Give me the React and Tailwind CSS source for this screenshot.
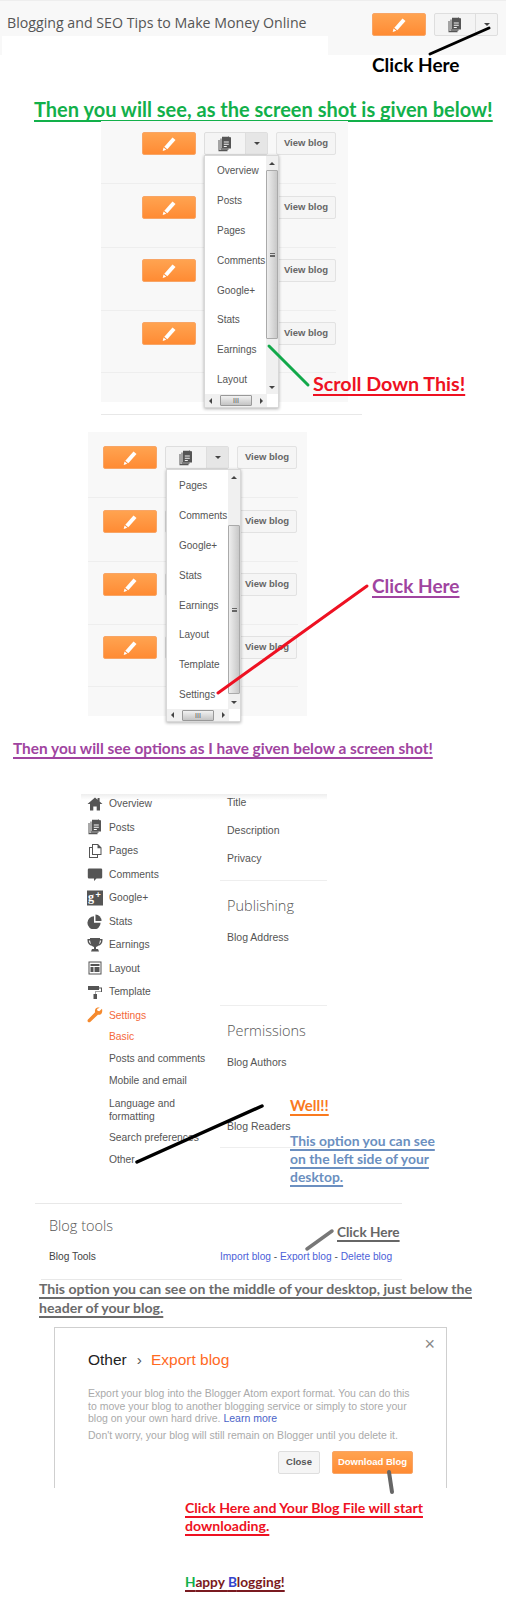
// Walkthrough image: export a Blogger blog, pasted screenshots with hand-drawn notes
const noteFont = "font-['Lato',sans-serif] font-bold";
const notes = `${noteFont} underline decoration-[1.5px] underline-offset-[3px] [text-decoration-skip-ink:none]`;
const arial = "font-['Liberation_Sans',Arial,sans-serif]";
const openSans = "font-['Open_Sans',sans-serif]";

function PencilIcon() {
    return (
        <svg width="16" height="16" viewBox="0 0 16 16" fill="#fff">
            <path d="M11.5 1.5l3 2.5-8.2 9.3-3-2.5z" />
            <path d="M2.6 11.4l2.7 2.3-3.6 1.3z" />
        </svg>
    );
}

function PostsIcon({ color = "#555" }) {
    return (
        <svg width="16" height="16" viewBox="0 0 16 16" fill={color}>
            <path d="M1.5 4h1v10h8v1.3h-9z" />
            <path d="M3.5 2.5h1v10h7v1.2h-8z" />
            <path fillRule="evenodd" d="M5 .8h6l.6-.6 1 1 .9-.3.5 1.2V12.5H5zM6.8 5.5v1h5v-1zm0 2.3v1h5v-1zm0 2.2v1h3v-1z" />
        </svg>
    );
}

function CaretIcon() {
    return <span className="h-0 w-0 border-x-[3px] border-t-[3px] border-x-transparent border-t-[#444]" />;
}

function EditButton() {
    return (
        <div className="flex h-[23px] w-[54px] items-center justify-center rounded-[2px] border border-[#f8a566] bg-gradient-to-b from-[#ffa350] to-[#ff8b33]">
            <PencilIcon />
        </div>
    );
}

function PageGroup({ pressed }) {
    return (
        <div className="flex h-[23px] w-[64px] rounded-[2px] border border-[#dedede] bg-[#f4f4f4]">
            <div className="flex w-[41px] items-center justify-center border-r border-[#dedede]">
                <PostsIcon />
            </div>
            <div className={pressed ? "flex flex-1 items-center justify-center bg-[#e6e6e6]" : "flex flex-1 items-center justify-center"}>
                <CaretIcon />
            </div>
        </div>
    );
}

function ViewBlog() {
    return (
        <div className={`${arial} flex h-[23px] w-[60px] items-center justify-center rounded-[2px] border border-[#e2e2e2] bg-[#f5f5f5] text-[9.5px] font-bold text-[#666]`}>
            View blog
        </div>
    );
}

function BlogRow({ rowClass, indent }) {
    return (
        <div className={rowClass}>
            <div className={indent}>
                <EditButton />
            </div>
            <div className="ml-2">
                <PageGroup pressed />
            </div>
            <div className="ml-2">
                <ViewBlog />
            </div>
        </div>
    );
}

function Arrow({ dir }) {
    if (dir === "up") return <span className="h-0 w-0 border-x-[3px] border-b-[3px] border-x-transparent border-b-[#444]" />;
    if (dir === "down") return <span className="h-0 w-0 border-x-[3px] border-t-[3px] border-x-transparent border-t-[#444]" />;
    if (dir === "left") return <span className="h-0 w-0 border-y-[3px] border-r-[3px] border-y-transparent border-r-[#444]" />;
    return <span className="h-0 w-0 border-y-[3px] border-l-[3px] border-y-transparent border-l-[#444]" />;
}

// The opened dropdown with its native scrollbars
function Dropdown({ items, thumbGap, posClass, listClass }) {
    return (
        <div className={`${posClass} ${arial} absolute z-10 flex h-[253px] w-[75px] flex-col border border-[#d8d8d8] bg-white shadow-[0_1px_3px_rgba(0,0,0,0.3)]`}>
            <div className="flex flex-1">
                <div className={`${listClass} flex-1 overflow-hidden pl-[12px] text-[10px] text-[#555]`}>
                    {items.map((item) => (
                        <div key={item} className="flex h-[29.8px] items-center whitespace-nowrap">
                            {item}
                        </div>
                    ))}
                </div>
                <div className="flex w-[12px] flex-col bg-[#f0f0f0]">
                    <div className="flex h-[14px] items-center justify-center">
                        <Arrow dir="up" />
                    </div>
                    <div className={`${thumbGap} flex h-[169px] items-center justify-center rounded-[1px] border border-[#aaa] bg-gradient-to-r from-[#eee] to-[#c8c8c8]`}>
                        <div className="h-[4px] w-[5px] border-y border-[#666] after:block after:h-[1px] after:translate-y-[1px] after:bg-[#666]" />
                    </div>
                    <div className="mt-auto flex h-[14px] items-center justify-center">
                        <Arrow dir="down" />
                    </div>
                </div>
            </div>
            <div className="flex h-[13px]">
                <div className="flex w-[62px] items-center justify-between bg-[#f0f0f0] px-[4px]">
                    <Arrow dir="left" />
                    <div className="flex h-[11px] w-[32px] items-center justify-center rounded-[1px] border border-[#999] bg-gradient-to-b from-[#f2f2f2] to-[#c4c4c4] text-[7px] leading-none text-[#555]">
                        III
                    </div>
                    <Arrow dir="right" />
                </div>
            </div>
        </div>
    );
}

const sideIcons = {
    home: <path d="M8 1.5l2.6 2.3V2h2v3.6L15.5 8H13v6.5H9.7v-4H6.3v4H3V8H.5z" />,
    pages: (
        <path fillRule="evenodd" d="M5 1h6l3.500 3.500V12H11v3H2V4h3zm1 1v9h7.500V5.200H10.500V2zM3 5v9h7v-2H5V5z" />
    ),
    comments: <path d="M2 2.500h12a1.200 1.200 0 0 1 1.200 1.200v7.600a1.200 1.200 0 0 1-1.200 1.200H9.500l-2.500 2.500v-2.500H2a1.200 1.200 0 0 1-1.200-1.200V3.700A1.200 1.200 0 0 1 2 2.500z" />,
    stats: (
        <>
            <path d="M7 3.200v6.600h6.600A6.600 6.600 0 1 1 7 3.200z" />
            <path d="M8.500 1.500a6.300 6.300 0 0 1 6 6.500h-6z" />
        </>
    ),
    earnings: (
        <path fillRule="evenodd" d="M.5 2H3V1h10v1h2.500v1.500c0 3-1.800 4.800-4.300 5.300-.6.700-1.300 1.100-2.200 1.300V12h2l1 2.500H4l1-2.500h2V10.100c-.9-.2-1.600-.6-2.200-1.300C2.300 8.300.5 6.500.5 3.500zM2 3.500c0 1.700.9 3 2.200 3.700C3.500 6 3.200 4.800 3.100 3.500zm12 0h-1.100c-.1 1.300-.4 2.500-1.100 3.700C13.100 6.500 14 5.200 14 3.500z" />
    ),
    layout: (
        <path fillRule="evenodd" d="M1.500 1.500h13v13h-13zm1 1v11h11v-11zm1 1.500h9v2h-9zm0 3h3v5h-3zm4 0h5v5h-5z" />
    ),
    template: <path d="M1 2h11v1.500h3V8H8.500v2h1.500v5H6.500v-5H8V7.500h6V4.500h-2V6H1z" />,
    settings: (
        <path d="M15 1.800l-2.700 2.500-1.800-.5-.5-1.800L12.700.7c-1.800-.5-3.800.1-4.500 1.800-.4 1-.3 2-.1 2.700L1 12.500c-.8.900-.5 1.900.1 2.400.6.600 1.600.700 2.400-.1l7.400-7.100c.8.200 1.700.2 2.500-.2 1.700-.8 2.200-3.200 1.600-5.700z" />
    ),
};

function SideIcon({ name, color }) {
    if (name === "google") {
        return (
            <svg width="16" height="16" viewBox="0 0 16 16">
                <rect x="0" y="0.500" width="16" height="15" fill="#555" />
                <text x="1" y="11" fontSize="12" fontWeight="bold" fill="#fff" fontFamily="Liberation Serif, serif">g</text>
                <text x="8.500" y="8" fontSize="9" fontWeight="bold" fill="#fff" fontFamily="Liberation Sans, sans-serif">+</text>
            </svg>
        );
    }
    if (name === "posts") return <PostsIcon />;
    return (
        <svg width="16" height="16" viewBox="0 0 16 16" fill={color}>
            {sideIcons[name]}
        </svg>
    );
}

const sideMain = [
    { label: "Overview", icon: "home" },
    { label: "Posts", icon: "posts" },
    { label: "Pages", icon: "pages" },
    { label: "Comments", icon: "comments" },
    { label: "Google+", icon: "google" },
    { label: "Stats", icon: "stats" },
    { label: "Earnings", icon: "earnings" },
    { label: "Layout", icon: "layout" },
    { label: "Template", icon: "template" },
    { label: "Settings", icon: "settings", active: true },
];

function Sidebar() {
    return (
        <div className={`${arial} relative w-[139px] shrink-0 pt-[1px] text-[10.3px] text-[#555]`}>
            {sideMain.map((item) => (
                <div key={item.label} className={item.active ? "flex h-[23.5px] items-center text-[#f4683a]" : "flex h-[23.5px] items-center"}>
                    <div className="-ml-[1px] flex w-[29px] justify-center">
                        <SideIcon name={item.icon} color={item.active ? "#f58a2e" : "#555"} />
                    </div>
                    <span>{item.label}</span>
                </div>
            ))}
            <div className="-mt-[1px] pl-[28px]">
                <div className="flex h-[22px] items-center text-[#f4683a]">Basic</div>
                <div className="flex h-[22px] items-center">Posts and comments</div>
                <div className="flex h-[22px] items-center">Mobile and email</div>
                <div className="flex h-[35px] items-center leading-[13px]">
                    Language and
                    <br />
                    formatting
                </div>
                <div className="flex h-[22px] items-center">Search preferences</div>
                <div className="flex h-[22px] items-center">Other</div>
            </div>
        </div>
    );
}

function SettingsColumn() {
    return (
        <div className={`${arial} w-[107px] text-[10.5px] text-[#555]`}>
            <div className="h-[22px] pl-[7px] leading-[22px]">Title</div>
            <div className="mt-[6px] h-[22px] pl-[7px] leading-[22px]">Description</div>
            <div className="mt-[6px] h-[22px] pl-[7px] leading-[22px]">Privacy</div>
            <div className="mt-[11px] h-px bg-[#eee]" />
            <div className={`${openSans} mt-[13px] h-[24px] pl-[7px] text-[14.5px] font-light leading-[24px] text-[#555]`}>Publishing</div>
            <div className="mt-[8px] h-[22px] pl-[7px] leading-[22px]">Blog Address</div>
            <div className="mt-[57px] h-px bg-[#eee]" />
            <div className={`${openSans} mt-[13px] h-[24px] pl-[7px] text-[14.5px] font-light leading-[24px] text-[#555]`}>Permissions</div>
            <div className="mt-[8px] h-[22px] pl-[7px] leading-[22px]">Blog Authors</div>
            <div className="mt-[42px] h-[22px] pl-[7px] leading-[22px]">Blog Readers</div>
            <div className="mt-[10px] h-px bg-[#eee]" />
        </div>
    );
}

function ExportDialog() {
    return (
        <div className={`${arial} relative ml-[54px] mt-[10px] h-[161px] w-[393px] border-x border-t border-[#cfcfcf] pl-[33px] pt-[21px]`}>
            <div className="absolute right-[11px] top-[7px] text-[18px] leading-none text-[#888]">×</div>
            <div className="flex h-[22px] items-center text-[15.5px]">
                <span className="text-[#222]">Other</span>
                <span className="ml-[10px] text-[#555]">›</span>
                <span className="ml-[9px] text-[#ff6a1f]">Export blog</span>
            </div>
            <div className="mt-[16px] text-[10.5px] leading-[12.6px] text-[#aaa]">
                Export your blog into the Blogger Atom export format. You can do this
                <br />
                to move your blog to another blogging service or simply to store your
                <br />
                blog on your own hard drive. <span className="text-[#4a63c8]">Learn more</span>
            </div>
            <div className="mt-[4px] text-[10.5px] leading-[13px] text-[#aaa]">
                Don't worry, your blog will still remain on Blogger until you delete it.
            </div>
            <div className="mt-[9px] flex pl-[190px]">
                <div className="flex h-[23px] w-[42px] items-center justify-center rounded-[2px] border border-[#dedede] bg-[#f5f5f5] text-[9.5px] font-bold text-[#555]">
                    Close
                </div>
                <div className="ml-[12px] flex h-[23px] w-[81px] items-center justify-center rounded-[2px] border border-[#f8a566] bg-gradient-to-b from-[#ffa350] to-[#ff8b33] text-[9.5px] font-bold text-white">
                    Download Blog
                </div>
            </div>
        </div>
    );
}

const menuTop = ["Overview", "Posts", "Pages", "Comments", "Google+", "Stats", "Earnings", "Layout"];
const menuBottom = ["Pages", "Comments", "Google+", "Stats", "Earnings", "Layout", "Template", "Settings"];

export default function App() {
    return (
        <div className="relative h-[1600px] w-[506px] overflow-hidden bg-white">
            {/* first crop of the dashboard */}
            <div className="relative flex h-[55px] items-start border-t border-[#eee] bg-[#f8f8f8] pl-[7px] pr-[8px] pt-[12px]">
                <div className={`${openSans} h-[23px] text-[14.2px] leading-[20px] text-[#555]`}>
                    Blogging and SEO Tips to Make Money Online
                </div>
                <div className="ml-auto">
                    <EditButton />
                </div>
                <div className="ml-2">
                    <PageGroup />
                </div>
                <div className="absolute left-[2px] top-[35px] h-[20px] w-[326px] bg-white" />
            </div>

            <div className={`${noteFont} ml-[372px] h-[20px] text-[19px] leading-[19px] text-black`}>Click Here</div>
            <div className={`${notes} ml-[34px] mt-[22px] h-[24px] whitespace-nowrap text-[20px] leading-[24px] text-[#12b04a]`}>
                Then you will see, as the screen shot is given below!
            </div>

            {/* dropdown open, top of list */}
            <div className="relative ml-[101px] h-[281px] w-[247px] bg-[#f8f8f8]">
                <BlogRow rowClass="flex h-[63px] w-[235px] border-b border-[#eee] pt-[11px]" indent="ml-[41px]" />
                <BlogRow rowClass="flex h-[64px] w-[235px] border-b border-[#eee] pt-[12px]" indent="ml-[41px]" />
                <BlogRow rowClass="flex h-[63px] w-[235px] border-b border-[#eee] pt-[11px]" indent="ml-[41px]" />
                <BlogRow rowClass="flex h-[62px] w-[235px] border-b border-[#eee] pt-[11px]" indent="ml-[41px]" />
                <Dropdown items={menuTop} thumbGap="" listClass="" posClass="left-[103px] top-[34px]" />
            </div>
            <div className="relative">
                <div className={`${notes} absolute left-[313px] top-[-30px] whitespace-nowrap text-[19.7px] leading-[24px] text-[#ee1122]`}>Scroll Down This!</div>
            </div>
            <div className="ml-[101px] mt-[12px] h-px w-[261px] bg-[#e8e8e8]" />

            {/* dropdown open, scrolled down */}
            <div className="relative ml-[88px] mt-[17px] h-[284px] w-[219px] bg-[#f8f8f8]">
                <BlogRow rowClass="flex h-[66px] w-[210px] border-b border-[#eee] pt-[14px]" indent="ml-[15px]" />
                <BlogRow rowClass="flex h-[64px] w-[210px] border-b border-[#eee] pt-[12px]" indent="ml-[15px]" />
                <BlogRow rowClass="flex h-[63px] w-[210px] border-b border-[#eee] pt-[11px]" indent="ml-[15px]" />
                <BlogRow rowClass="flex h-[62px] w-[210px] border-b border-[#eee] pt-[11px]" indent="ml-[15px]" />
                <Dropdown items={menuBottom} thumbGap="mt-[41px]" listClass="pt-[1px]" posClass="left-[78px] top-[37px]" />
            </div>
            <div className="relative">
                <div className={`${notes} absolute left-[372px] top-[-142px] whitespace-nowrap text-[19px] leading-[24px] text-[#a044a0]`}>Click Here</div>
            </div>
            <div className={`${notes} ml-[13px] mt-[20px] h-[24px] whitespace-nowrap text-[15.4px] leading-[24px] text-[#a044a0]`}>
                Then you will see options as I have given below a screen shot!
            </div>

            {/* settings sidebar */}
            <div className="relative ml-[81px] mt-[31px] flex h-[412px] w-[246px]">
                <div className="absolute left-0 top-[3px] h-[6px] w-full bg-gradient-to-b from-[#eee] to-white" />
                <Sidebar />
                <div className="relative">
                    <SettingsColumn />
                </div>
                <div className="absolute left-[209px] top-[305px] w-[200px]">
                    <div className={`${notes} text-[15px] leading-[18px] text-[#f97a1f]`}>Well!!</div>
                    <div className={`${notes} mt-[18px] whitespace-nowrap text-[13.9px] leading-[18px] text-[#6b8fc0]`}>
                        This option you can see
                        <br />
                        on the left side of your
                        <br />
                        desktop.
                    </div>
                </div>
            </div>

            {/* blog tools */}
            <div className="ml-[35px] h-px w-[367px] bg-[#e8e8e8]" />
            <div className={`${openSans} ml-[49px] mt-[10px] h-[24px] text-[14.5px] font-light leading-[24px] text-[#555]`}>Blog tools</div>
            <div className={`${arial} ml-[49px] mt-[8px] flex h-[22px] items-center text-[10.2px] text-[#444]`}>
                <span className="w-[171px]">Blog Tools</span>
                <span className="text-[#555]">
                    <span className="text-[#4d5fd8]">Import blog</span> - <span className="text-[#4d5fd8]">Export blog</span> - <span className="text-[#4d5fd8]">Delete blog</span>
                </span>
            </div>
            <div className="relative">
                <div className={`${notes} absolute left-[337px] top-[-46px] whitespace-nowrap text-[13.6px] leading-[20px] text-[#666]`}>Click Here</div>
            </div>
            <div className="ml-[41px] mt-[11px] h-px w-[361px] bg-[#e8e8e8]" />
            <div className={`${notes} ml-[39px] whitespace-nowrap text-[14.1px] leading-[18.5px] text-[#6b6b6b]`}>
                This option you can see on the middle of your desktop, just below the
                <br />
                header of your blog.
            </div>

            <ExportDialog />

            <div className={`${notes} ml-[185px] mt-[11px] whitespace-nowrap text-[14.1px] leading-[18px] text-[#ee1122]`}>
                Click Here and Your Blog File will start
                <br />
                downloading.
            </div>
            <div className={`${notes} ml-[185px] mt-[35px] h-[24px] text-[13.7px] leading-[24px] text-[#7a1a20]`}>
                <span className="text-[#12b04a]">H</span>appy <span className="text-[#3344cc]">B</span>logging!
            </div>

            {/* hand-drawn arrows over everything */}
            <svg className="pointer-events-none absolute left-0 top-0 z-20" width="506" height="1600" viewBox="0 0 506 1600" fill="none" strokeLinecap="round">
                <path d="M430 54L489 28" stroke="#000" strokeWidth="3" />
                <path d="M269 346L308 385" stroke="#12a84a" strokeWidth="3" />
                <path d="M218 693L367 586" stroke="#ee1122" strokeWidth="3" />
                <path d="M137 1162L262 1106" stroke="#000" strokeWidth="3.5" />
                <path d="M307 1249L332 1231" stroke="#777" strokeWidth="3.5" />
                <path d="M389 1472L392 1492" stroke="#666" strokeWidth="4" />
            </svg>
        </div>
    );
}
